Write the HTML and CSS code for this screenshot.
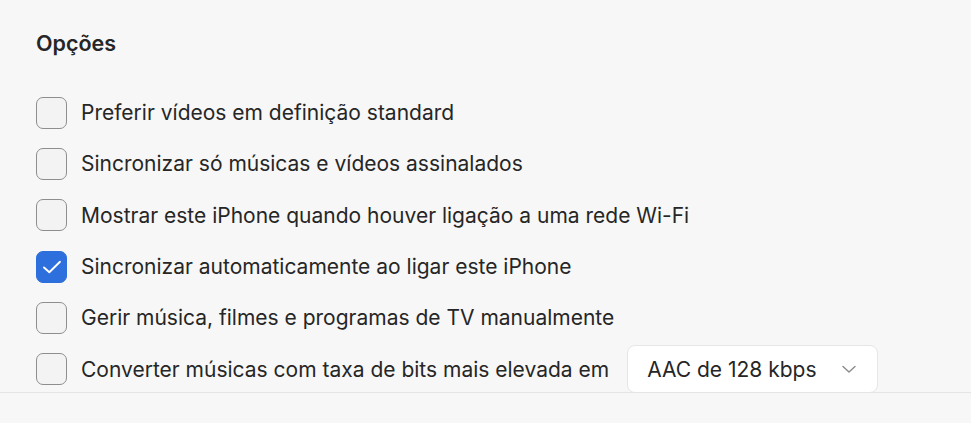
FILE: index.html
```html
<!DOCTYPE html>
<html lang="pt">
<head>
    <meta charset="UTF-8">
    <title>Opções</title>
    <link rel="stylesheet" href="styles.css">
</head>
<body>
    <div class="panel">
        <h2 class="title">Opções</h2>
        <div class="options">
            <label class="option">
                <span class="box"></span>
                <span class="label">Preferir vídeos em definição standard</span>
            </label>
            <label class="option">
                <span class="box"></span>
                <span class="label">Sincronizar só músicas e vídeos assinalados</span>
            </label>
            <label class="option">
                <span class="box"></span>
                <span class="label">Mostrar este iPhone quando houver ligação a uma rede Wi-Fi</span>
            </label>
            <label class="option">
                <span class="box checked">
                    <svg width="22" height="22" viewBox="0 0 22 22"><path d="M3 11.5 L8.3 16.2 L19 5.8" fill="none" stroke="#fff" stroke-width="1.9" stroke-linecap="round" stroke-linejoin="round"/></svg>
                </span>
                <span class="label">Sincronizar automaticamente ao ligar este iPhone</span>
            </label>
            <label class="option">
                <span class="box"></span>
                <span class="label">Gerir música, filmes e programas de TV manualmente</span>
            </label>
            <div class="option">
                <span class="box"></span>
                <span class="label">Converter músicas com taxa de bits mais elevada em</span>
                <div class="select">
                    <span>AAC de 128 kbps</span>
                    <svg width="16" height="16" viewBox="0 0 16 16"><path d="M2 5.5 L8 11 L14 5.5" fill="none" stroke="#8a8a8a" stroke-width="1.4" stroke-linecap="round" stroke-linejoin="round"/></svg>
                </div>
            </div>
        </div>
    </div>
</body>
</html>
```

FILE: styles.css
```css
* {
    margin: 0;
    padding: 0;
    box-sizing: border-box;
}

body {
    font-family: Inter, 'Noto Sans', sans-serif;
    background: #f7f7f7;
    color: #262626;
}

.panel {
    height: 393px;
    border-bottom: 1px solid #e4e4e4;
    overflow: hidden;
    padding: 29px 36px 0;
}

.title {
    font-size: 21.5px;
    font-weight: 600;
    line-height: 28px;
    margin-bottom: 30px;
}

.options {
    display: flex;
    flex-direction: column;
}

.option {
    display: flex;
    align-items: center;
    height: 51.3px;
    font-size: 21px;
}

.box {
    width: 31px;
    height: 32px;
    border: 1.5px solid #8e8e8e;
    border-radius: 7px;
    background: #f3f3f3;
    margin-right: 14px;
    flex-shrink: 0;
    display: flex;
    align-items: center;
    justify-content: center;
}

.box.checked {
    background: #2d6fdc;
    border-color: #2d6fdc;
}

.select {
    margin-left: 18px;
    width: 251px;
    height: 48px;
    background: #fff;
    border: 1px solid #e6e6e6;
    border-radius: 8px;
    display: flex;
    align-items: center;
    justify-content: space-between;
    padding: 0 20px 0 19px;
}
```
